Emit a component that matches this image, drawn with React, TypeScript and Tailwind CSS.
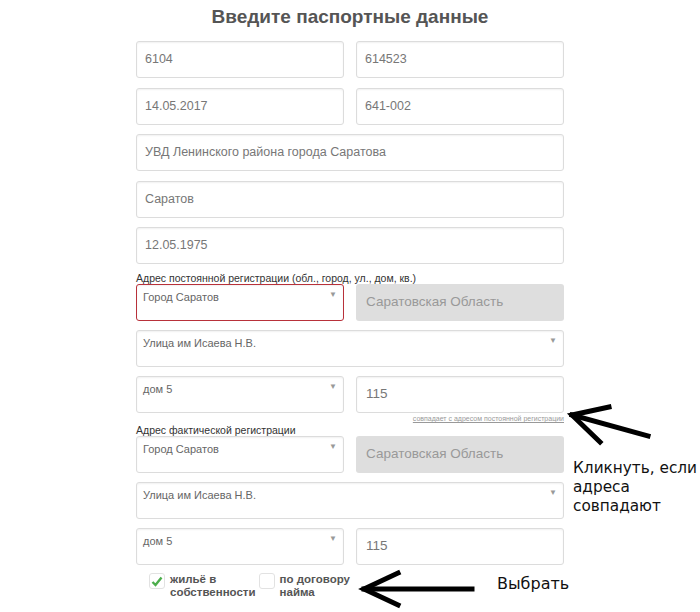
const base =
  'h-[37px] rounded-[3px] bg-white shadow-[inset_0_1px_2px_rgba(0,0,0,0.06)]';
const field = `${base} border border-[#dcdcdc]`;

function Input({ value }: { value: string }) {
  return (
    <div className={`${field} flex items-center px-[8px] text-[12.5px] text-[#777]`}>
      {value}
    </div>
  );
}

function Select({ value, error }: { value: string; error?: boolean }) {
  const frame = error ? `${base} border-[1.5px] border-[#b8313a]` : field;
  return (
    <div
      className={`${frame} flex items-start justify-between pl-[6px] pr-[6px] pt-[4px] text-[11px] text-[#666]`}
    >
      <span>{value}</span>
      <span className="text-[8px] text-[#999]">▼</span>
    </div>
  );
}

function Region() {
  return (
    <div className="flex h-[37px] items-center rounded-[3px] bg-[#dedede] px-[10px] text-[13.5px] text-[#999]">
      Саратовская Область
    </div>
  );
}

function Address({ label, link }: { label: string; link?: boolean }) {
  return (
    <div>
      <div className="text-[10.5px] leading-[11px] text-[#333]">{label}</div>
      <div className="flex flex-col gap-[9px]">
        <div className="grid grid-cols-2 gap-x-[12px]">
          <Select value="Город Саратов" error={link} />
          <Region />
        </div>
        <Select value="Улица им Исаева Н.В." />
        <div className="grid grid-cols-2 gap-x-[12px]">
          <Select value="дом 5" />
          <div className={`${field} flex items-center px-[9px] text-[13.5px] text-[#777]`}>115</div>
        </div>
      </div>
      {link && (
        <div className="flex h-[12px] justify-end pt-[2px]">
          <span className="text-[7px] leading-[8px] text-[#999] underline">
            совпадает с адресом постоянной регистрации
          </span>
        </div>
      )}
    </div>
  );
}

function Check({ checked, label }: { checked?: boolean; label: string[] }) {
  return (
    <div className="flex items-start gap-[5px]">
      <div className="flex h-[16px] w-[16px] shrink-0 items-center justify-center rounded-[3px] border border-[#e2e2e2] bg-white">
        {checked && (
          <svg width="12" height="11" viewBox="0 0 12 11">
            <path d="M1.5 6 L4.5 9 L10.5 1.5" fill="none" stroke="#4cae4c" strokeWidth="2.4" />
          </svg>
        )}
      </div>
      <div className="text-[11.5px] font-bold leading-[13px] text-[#555]">
        {label.map((l) => (
          <div key={l}>{l}</div>
        ))}
      </div>
    </div>
  );
}

export default function App() {
  return (
    <div className="relative h-[612px] w-[700px] overflow-hidden bg-white font-['Liberation_Sans',Arial,sans-serif]">
      <h1 className="pt-[2px] text-center text-[19px] font-bold leading-[30px] text-[#555]">
        Введите паспортные данные
      </h1>

      <div className="mx-auto mt-[9px] w-[428px]">
        <div className="flex flex-col gap-[9.5px]">
          <div className="grid grid-cols-2 gap-x-[12px]">
            <Input value="6104" />
            <Input value="614523" />
          </div>
          <div className="grid grid-cols-2 gap-x-[12px]">
            <Input value="14.05.2017" />
            <Input value="641-002" />
          </div>
          <Input value="УВД Ленинского района города Саратова" />
          <Input value="Саратов" />
          <Input value="12.05.1975" />
        </div>

        <div className="mt-[9px]">
          <Address label="Адрес постоянной регистрации (обл., город, ул., дом, кв.)" link />
        </div>
        <div>
          <Address label="Адрес фактической регистрации" />
        </div>

        <div className="mt-[8px] flex gap-[3px] pl-[13px]">
          <Check checked label={['жильё в', 'собственности']} />
          <Check label={['по договору', 'найма']} />
        </div>
      </div>

      {/* annotations */}
      <svg className="absolute left-0 top-0" width="700" height="612">
        <g stroke="#000" strokeWidth="5" fill="none" strokeLinecap="square">
          <path d="M572 415 L648 436" />
          <path d="M609 407 L572 415 L600 442" />
          <path d="M364 589 L472 589" />
          <path d="M398 573 L364 589 L398 605" />
        </g>
      </svg>
      <div className="absolute left-[573px] top-[459px] whitespace-nowrap font-['DejaVu_Sans',sans-serif] text-[15.3px] leading-[19px] text-[#111]">
        <div>Кликнуть, если</div>
        <div>адреса</div>
        <div>совпадают</div>
      </div>
      <div className="absolute left-[497px] top-[574px] font-['DejaVu_Sans',sans-serif] text-[16px] leading-[19px] text-[#111]">
        Выбрать
      </div>
    </div>
  );
}
